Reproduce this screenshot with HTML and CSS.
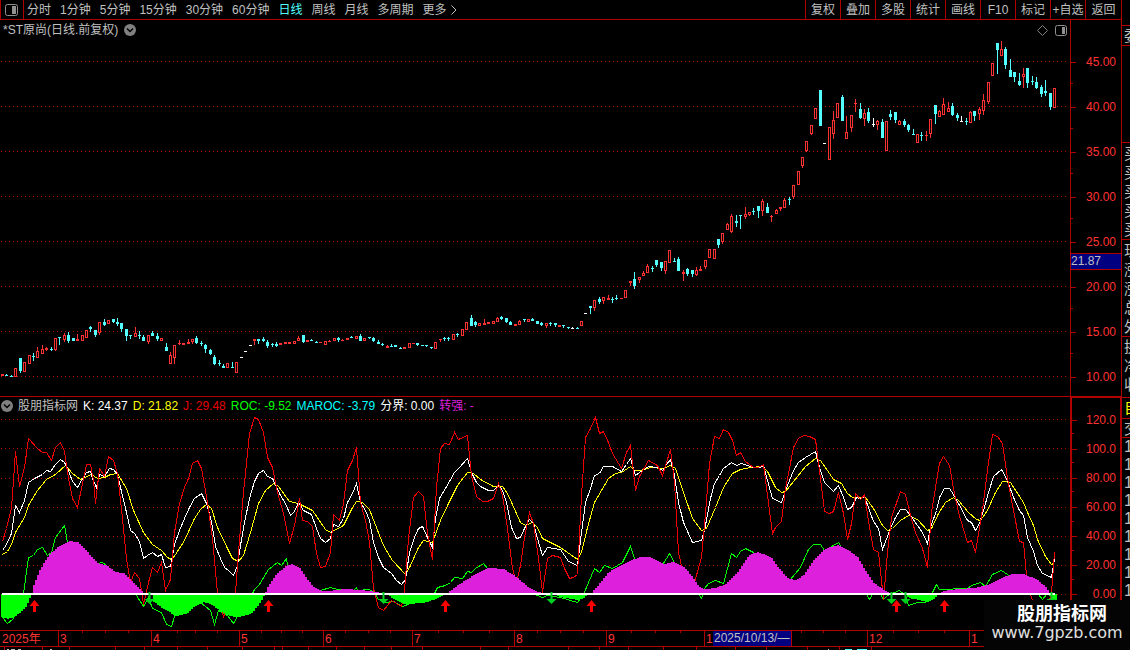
FILE: index.html
```html
<!DOCTYPE html>
<html lang="zh-CN">

<head>
    <meta charset="UTF-8">
    <meta name="viewport" content="width=device-width, initial-scale=1.0">
    <title>*ST原尚 日线</title>
    <link rel="stylesheet" href="styles.css">
</head>

<body>
    <div class="terminal">
        <div class="main">
            <!-- 顶部工具栏 -->
            <div class="toolbar">
                <button class="layout-btn" aria-label="布局">
                    <svg width="13" height="12" viewBox="0 0 13 12">
                        <rect x="0.5" y="0.5" width="12" height="11" rx="2" fill="none" stroke="#909090" />
                        <rect x="7" y="2" width="4" height="8" fill="#909090" />
                    </svg>
                </button>
                <div class="periods">
                    <button>分时</button>
                    <button>1分钟</button>
                    <button>5分钟</button>
                    <button>15分钟</button>
                    <button>30分钟</button>
                    <button>60分钟</button>
                    <button class="active">日线</button>
                    <button>周线</button>
                    <button>月线</button>
                    <button>多周期</button>
                    <button>更多
                        <svg width="6" height="10" viewBox="0 0 6 10">
                            <path d="M0.5 0.5L5 5L0.5 9.5" fill="none" stroke="#c0c0c0" />
                        </svg>
                    </button>
                </div>
                <div class="tools">
                    <button>复权</button>
                    <button>叠加</button>
                    <button>多股</button>
                    <button>统计</button>
                    <button>画线</button>
                    <button>F10</button>
                    <button>标记</button>
                    <button>+自选</button>
                    <button>返回</button>
                </div>
            </div>

            <!-- K线 -->
            <div class="panel price">
                <div class="chart">
                    <svg id="priceChart" viewBox="0 20 1070 376" preserveAspectRatio="none"></svg>
                    <div class="panel-head">
                        <span>*ST原尚(日线.前复权)</span>
                        <button class="fold" aria-label="展开">
                            <svg width="12" height="12" viewBox="0 0 12 12">
                                <circle cx="6" cy="6" r="6" fill="#808080" />
                                <path d="M3 4.5L6 7.5L9 4.5" fill="none" stroke="#000" stroke-width="1.5" />
                            </svg>
                        </button>
                        <div class="head-icons">
                            <svg width="11" height="11" viewBox="0 0 11 11">
                                <path d="M5.5 0.5L10.5 5.5L5.5 10.5L0.5 5.5Z" fill="none" stroke="#808080" />
                            </svg>
                            <svg width="12" height="11" viewBox="0 0 12 11">
                                <rect x="0.5" y="0.5" width="11" height="10" rx="2" fill="none" stroke="#909090" />
                                <rect x="7" y="2" width="3" height="7" fill="#909090" />
                            </svg>
                        </div>
                    </div>
                </div>
                <div class="axis">
                    <ul>
                        <li>45.00</li>
                        <li>40.00</li>
                        <li>35.00</li>
                        <li>30.00</li>
                        <li>25.00</li>
                        <li>20.00</li>
                        <li>15.00</li>
                        <li>10.00</li>
                    </ul>
                    <div class="price-mark">21.87</div>
                </div>
            </div>

            <!-- 指标 -->
            <div class="panel indicator">
                <div class="chart">
                    <svg id="kdjChart" viewBox="0 397 1070 233" preserveAspectRatio="none"></svg>
                    <div class="panel-head">
                        <button class="fold" aria-label="展开">
                            <svg width="12" height="12" viewBox="0 0 12 12">
                                <circle cx="6" cy="6" r="6" fill="#808080" />
                                <path d="M3 4.5L6 7.5L9 4.5" fill="none" stroke="#000" stroke-width="1.5" />
                            </svg>
                        </button>
                        <span>股朋指标网</span>
                        <span class="k">K: 24.37</span>
                        <span class="d">D: 21.82</span>
                        <span class="j">J: 29.48</span>
                        <span class="roc">ROC: -9.52</span>
                        <span class="maroc">MAROC: -3.79</span>
                        <span class="k">分界: 0.00</span>
                        <span class="strong">转强: -</span>
                    </div>
                </div>
                <div class="axis">
                    <ul>
                        <li>120.0</li>
                        <li>100.0</li>
                        <li>80.00</li>
                        <li>60.00</li>
                        <li>40.00</li>
                        <li>20.00</li>
                        <li>0.00</li>
                    </ul>
                </div>
            </div>

            <!-- 时间轴 -->
            <div class="dates">
                <span>2025年</span>
                <span>3</span>
                <span>4</span>
                <span>5</span>
                <span>6</span>
                <span>7</span>
                <span>8</span>
                <span>9</span>
                <span>1</span>
                <span>12</span>
                <span>1</span>
                <svg id="dateTicks" viewBox="0 0 1121 3" preserveAspectRatio="none"></svg>
                <div class="date-mark">2025/10/13/—</div>
            </div>
            <div class="tabs">
                <svg id="tabTicks" viewBox="0 0 1121 3" preserveAspectRatio="none"></svg>
            </div>
        </div>

        <!-- 右侧报价 -->
        <div class="quote">
            <div class="group first">委</div>
            <div class="group rows">
                <span>买</span><span>买</span><span>买</span><span>买</span><span>买</span>
            </div>
            <div class="group rows">
                <span>现</span><span>涨</span><span>涨</span><span>总</span><span>外</span>
            </div>
            <div class="group extra">
                <span>换</span><span>净</span><span>收</span>
            </div>
            <div class="group self">自</div>
            <div class="group deal">交</div>
            <div class="group ticks">
                <span>1</span><span>1</span><span>1</span><span>1</span><span>1</span><span>1</span><span>1</span><span>1</span><span>1</span>
            </div>
        </div>

        <div class="watermark">
            <strong>股朋指标网</strong>
            <span>www.7gpzb.com</span>
        </div>
    </div>
    <script src="chart.js"></script>
</body>

</html>
```
FILE: styles.css
```css
* {
    margin: 0;
    padding: 0;
    box-sizing: border-box;
}

body {
    background-color: #000;
    color: #c0c0c0;
    font-family: "Liberation Sans", "Noto Sans CJK SC", sans-serif;
    font-size: 12px;
    line-height: 18px;
    overflow: hidden;
}

button {
    background: none;
    border: none;
    color: inherit;
    font: inherit;
    white-space: nowrap;
    cursor: pointer;
}

ul {
    list-style: none;
}

svg {
    display: block;
}

.terminal {
    position: relative;
    display: flex;
    height: 100vh;
}

.main {
    flex: 1;
    min-width: 0;
    display: flex;
    flex-direction: column;
}

/* 工具栏 */
.toolbar {
    display: flex;
    height: 20px;
    border-bottom: 1px solid #b00000;
}

.layout-btn {
    width: 24px;
    padding-left: 4px;
    border-left: 1px solid #b00000;
    border-right: 1px solid #b00000;
}

.periods {
    display: flex;
    flex: 1;
    gap: 9px;
    padding-left: 3px;
}

.periods button {
    display: flex;
    align-items: center;
    gap: 4px;
}

.periods .active {
    color: #54ffff;
}

.tools {
    display: flex;
}

.tools button {
    width: 35px;
    border-left: 1px solid #b00000;
}

.tools button:last-child {
    width: 36px;
}

/* 图表区 */
.panel {
    display: flex;
    min-height: 0;
}

.price {
    flex: 376 1 0;
}

.indicator {
    flex: 234 1 0;
}

.chart {
    position: relative;
    flex: 1;
    min-width: 0;
}

.chart > svg {
    width: 100%;
    height: 100%;
}

.indicator .chart {
    border-top: 1px solid #b00000;
}

.panel-head {
    position: absolute;
    top: 0;
    left: 0;
    right: 0;
    display: flex;
    align-items: center;
    gap: 5px;
    padding: 0 3px 0 1px;
}

.price .panel-head {
    gap: 6px;
    padding-left: 3px;
    line-height: 20px;
}

.head-icons {
    display: flex;
    gap: 7px;
    margin-left: auto;
}

.k {
    color: #fff;
}

.d {
    color: #ff0;
}

.j {
    color: #e60000;
}

.roc {
    color: #0f0;
}

.maroc {
    color: #0ff;
}

.strong {
    color: #dc20dc;
}

/* 坐标轴 */
.axis {
    position: relative;
    width: 51px;
    color: #ff3232;
    text-align: right;
    border-left: 1px solid #b00000;
}

.axis ul {
    display: flex;
    flex-direction: column;
}

.axis li {
    position: relative;
    flex: 1;
    display: flex;
    align-items: center;
    justify-content: flex-end;
    padding-right: 5px;
}

.axis li::before,
.axis li::after {
    content: "";
    position: absolute;
    left: 0;
    height: 1px;
    background-color: #b00000;
}

.axis li::before {
    width: 5px;
    top: 50%;
}

.axis li::after {
    width: 2px;
    bottom: 0;
}

.axis li:last-child::after {
    display: none;
}

.price ul {
    height: 360px;
    margin-top: 19px;
}

.indicator .axis {
    border: 2px solid #b00000;
    border-right-width: 1px;
    border-bottom: none;
}

.indicator li {
    padding-right: 4px;
}

.indicator ul {
    height: 204px;
    margin-top: 7px;
}

.price-mark {
    position: absolute;
    top: 233px;
    left: 0;
    right: 0;
    height: 17px;
    line-height: 15px;
    color: #c0c0c0;
    text-align: left;
    background-color: #000080;
    border-top: 1px solid #b00000;
    border-bottom: 1px solid #b00000;
}

/* 时间轴 */
.dates {
    position: relative;
    display: grid;
    grid-template-columns: 58fr 93fr 88fr 84fr 89fr 102fr 92fr 98fr 163fr 102fr 152fr;
    height: 17px;
    line-height: 16px;
    color: #ff3232;
    border-top: 1px solid #b00000;
    border-bottom: 1px solid #b00000;
}

.dates span {
    padding-left: 1px;
    border-left: 1px solid #b00000;
}

.dates span:first-child {
    padding-left: 2px;
    border-left: none;
}

.dates svg,
.tabs svg {
    width: 100%;
    height: 3px;
}

.dates svg {
    position: absolute;
    top: 0;
    left: 0;
}

.date-mark {
    position: absolute;
    top: 0;
    left: 713px;
    width: 79px;
    height: 15px;
    line-height: 15px;
    padding-left: 1px;
    white-space: nowrap;
    color: #c0c0c0;
    background-color: #000080;
    border-right: 1px solid #b00000;
}

.tabs {
    height: 3px;
}

/* 右侧报价 */
.quote {
    width: 9px;
    padding-top: 25px;
    overflow: hidden;
    font-size: 15px;
    line-height: 19px;
    border-left: 1px solid #b00000;
}

.group {
    padding-left: 2px;
    border-top: 1px solid #b00000;
}

.group span {
    display: block;
}

.first {
    height: 21px;
    margin-bottom: 96px;
    border-bottom: 1px solid #b00000;
}

.rows {
    height: 97px;
    padding-top: 1px;
}

.extra {
    height: 61px;
}

.self {
    height: 21px;
    color: #ff0;
}

.deal {
    height: 19px;
}

.ticks {
    font-size: 16px;
    line-height: 18px;
}

/* 水印 */
.watermark {
    position: absolute;
    right: 0;
    bottom: 0;
    display: flex;
    flex-direction: column;
    align-items: center;
    width: 146px;
    height: 50px;
    padding-top: 4px;
    background-color: #040404;
}

.watermark strong {
    padding-right: 10px;
    margin-left: 10px;
    padding-left: 10px;
    color: #fff;
    font-size: 18px;
    line-height: 20px;
}

.watermark span {
    color: #e0e0e0;
    font-family: "DejaVu Sans", sans-serif;
    font-size: 16px;
    line-height: 18px;
}
```
FILE: chart.js
```js
var NS = 'http://www.w3.org/2000/svg';
var RED = '#ff3232', CYAN = '#54ffff', WHITE = '#ffffff', LINE = '#b00000';
var COUNT = 239;

// 每根K线: 最高 实体上沿 实体下沿 最低 方向(u涨 d跌 w平)
var candles = ('374 374 376 376 u,374 375 376 376 d,375 376 377 377 d,368 368 377 377 u,358 358 371 373 d,362 362 372 372 u,355 355 364 364 u,353 356 357 361 d,' +
    '347 351 358 358 u,345 349 354 354 u,347 348 350 351 u,347 349 350 351 d,338 338 350 351 u,337 337 338 345 d,333 335 340 342 u,332 335 341 343 d,' +
    '338 338 341 341 d,334 339 341 341 u,335 335 341 341 u,330 330 338 338 u,326 327 329 332 d,330 330 335 337 d,322 322 333 335 u,319 322 325 326 d,' +
    '320 320 324 324 u,319 319 322 323 d,318 322 324 326 d,323 323 329 332 d,329 329 336 341 d,335 335 336 339 d,327 333 337 337 u,331 335 336 339 d,' +
    '335 337 341 341 d,335 335 342 344 u,331 333 336 336 d,333 336 339 341 d,338 338 341 341 u,343 347 351 351 d,352 355 364 364 u,345 345 358 364 u,' +
    '340 343 344 345 u,343 343 345 345 u,339 342 344 344 u,339 339 342 344 u,336 338 343 344 d,341 343 344 346 d,344 345 349 353 d,349 350 354 355 d,' +
    '355 357 364 365 d,360 363 364 366 d,364 366 368 368 d,363 363 368 368 u,362 367 368 368 d,362 362 373 373 u,357 357 358 358 w,351 351 352 352 w,' +
    '345 345 346 346 w,339 339 341 345 u,339 339 341 344 d,337 339 341 342 d,340 342 346 348 d,343 344 345 347 d,342 344 346 347 d,343 343 345 345 u,' +
    '342 342 344 344 u,342 342 344 344 u,341 341 344 344 u,336 338 341 341 u,335 335 342 343 d,340 340 342 342 u,339 340 341 341 d,341 342 343 343 d,' +
    '342 342 343 343 u,341 341 345 345 u,340 341 342 342 u,338 338 341 341 u,337 338 340 342 d,339 340 341 341 u,338 338 340 340 u,336 337 338 338 d,' +
    '336 336 339 339 u,334 336 341 341 d,338 338 341 341 u,337 337 338 339 d,337 338 341 342 d,340 342 344 344 d,343 344 345 346 d,345 346 348 348 u,' +
    '344 346 347 347 d,345 345 347 347 d,347 348 349 349 d,347 347 349 349 u,343 343 348 348 u,343 343 344 344 u,343 343 345 346 d,345 345 346 346 d,' +
    '345 345 346 347 d,347 347 348 349 d,342 342 349 349 u,339 339 340 342 u,337 338 339 341 d,337 338 339 341 d,334 334 340 340 u,333 334 335 337 d,' +
    '329 329 336 336 u,322 322 330 330 u,315 318 326 326 d,321 322 325 327 d,323 323 326 326 u,319 323 325 325 u,322 322 324 324 u,321 321 324 324 u,' +
    '317 318 322 322 u,316 317 319 320 d,318 318 322 323 d,321 322 325 325 d,324 324 326 326 u,320 321 325 325 u,319 319 320 322 d,319 319 322 322 u,' +
    '318 319 321 321 d,321 321 324 324 d,322 323 325 326 d,323 323 326 328 u,322 323 324 326 d,323 323 325 327 d,325 325 327 327 u,325 325 326 328 d,' +
    '327 327 328 329 d,327 328 329 329 w,327 328 329 329 d,321 321 326 326 u,313 313 314 314 w,306 306 308 314 d,300 300 308 311 u,297 299 302 304 d,' +
    '297 297 301 304 u,295 298 300 300 u,297 299 300 303 d,295 298 299 300 d,298 298 299 299 u,290 290 298 298 u,281 281 283 286 u,272 279 286 289 d,' +
    '277 277 280 283 u,271 273 276 276 u,264 266 273 273 u,266 268 269 272 d,260 260 265 267 d,262 262 268 271 d,261 261 271 274 u,250 250 263 263 u,' +
    '258 261 262 262 d,257 259 271 271 d,270 272 274 281 u,268 269 274 276 d,270 270 274 277 d,267 270 275 276 u,266 269 271 271 u,260 260 267 269 u,' +
    '249 249 258 258 u,249 249 259 259 u,239 239 245 248 d,233 233 242 244 u,223 224 230 230 u,214 216 232 233 u,215 221 223 227 d,215 215 216 229 d,' +
    '207 214 217 219 u,212 212 215 216 u,208 211 212 215 d,206 206 211 218 d,199 201 211 216 u,203 207 213 213 d,215 216 217 222 u,209 210 214 214 u,' +
    '207 207 209 211 u,198 200 208 208 u,197 199 200 205 d,185 185 197 199 u,171 171 185 185 u,157 157 166 168 u,141 141 151 152 u,125 125 134 135 u,' +
    '108 108 119 119 u,90 90 126 126 d,143 143 144 144 w,127 127 160 160 u,111 120 134 139 u,103 103 118 118 u,95 97 121 121 d,116 132 139 139 u,' +
    '115 115 128 132 u,99 103 104 112 u,103 109 118 119 d,109 113 119 126 u,108 112 121 123 d,118 124 125 127 w,120 121 125 130 u,119 122 138 138 d,' +
    '121 121 151 151 u,110 114 117 120 d,112 112 120 123 d,120 121 125 125 u,119 121 125 127 d,124 125 130 132 d,129 134 135 135 d,134 134 143 143 u,' +
    '132 135 136 141 d,131 135 136 141 u,119 119 134 138 u,105 105 114 124 d,110 111 117 117 u,98 104 115 115 u,102 108 112 112 u,103 106 115 116 d,' +
    '113 115 118 121 d,116 121 122 122 w,118 121 122 125 d,111 112 123 123 u,111 111 116 121 d,107 109 114 120 u,94 100 111 115 u,82 82 102 104 u,' +
    '63 63 76 76 u,43 43 50 74 d,41 49 56 56 u,47 49 65 69 d,59 70 77 77 d,72 72 77 82 d,73 81 85 86 d,68 74 77 88 u,' +
    '68 68 83 88 d,76 81 82 85 d,77 82 88 89 d,85 87 94 97 d,80 91 93 96 d,93 93 107 110 d,88 88 108 108 u').split(',');

var kLine = '2,550 6,544 11,533 15,505 19,512 24,500 28,482 34,478 42,474 46,470 50,471 55,464 60,459 64,462 68,470 72,481 77,487 81,480 86,472 90,471 92,478 96,487 99,474 104,476 109,468 113,469 117,474 121,491 126,512 130,530 134,533 139,541 143,558 147,555 152,552 157,556 161,554 165,567 170,566 174,544 179,530 184,518 189,507 194,498 201,493 206,503 211,521 215,546 220,558 224,567 228,570 233,575 237,565 240,545 244,522 249,498 254,481 258,473 263,470 267,476 272,478 280,495 285,503 290,515 294,511 298,502 303,510 311,514 316,528 320,538 325,542 330,538 333,524 338,526 343,518 347,502 352,493 356,483 360,502 365,510 369,520 373,542 378,557 383,567 391,573 396,580 401,584 405,579 409,552 414,537 418,528 422,526 427,537 432,547 435,518 439,498 445,488 449,481 454,472 458,468 467,458 471,472 476,482 480,486 488,490 493,490 498,485 502,490 506,502 511,527 516,538 520,537 524,528 529,519 533,523 537,538 542,555 547,547 560,549 568,561 577,565 581,532 585,502 590,488 594,475 599,473 603,466 612,466 621,471 626,464 630,458 635,475 639,472 648,466 657,467 662,470 666,464 670,459 674,475 678,502 683,522 688,533 692,542 701,540 704,530 710,498 714,483 719,475 723,468 731,462 736,465 741,463 753,467 760,467 763,465 767,480 772,498 781,502 785,490 793,470 798,462 805,457 815,451 819,467 824,482 833,491 838,485 843,497 847,509 851,507 856,497 860,498 864,496 869,510 873,521 878,528 882,549 890,528 895,517 900,509 905,509 910,515 917,525 922,532 927,543 930,527 936,510 939,497 944,488 949,488 953,494 958,503 967,520 971,522 975,530 979,523 983,510 988,492 993,476 1001,469 1007,480 1013,497 1019,510 1023,515 1027,537 1033,551 1037,565 1042,573 1051,577 1054,558';

var dLine = '2,554 7,551 11,544 15,532 24,517 28,505 37,490 46,479 55,474 65,465 72,473 80,479 91,474 97,478 104,477 110,474 117,473 126,488 133,510 143,532 152,544 161,550 167,557 171,559 175,554 184,540 194,518 200,509 206,504 211,508 217,527 227,548 232,558 238,561 243,555 250,532 258,503 265,490 273,483 278,486 289,501 298,503 312,510 325,529 330,532 343,525 352,507 356,501 362,502 369,509 374,522 383,545 392,560 405,574 410,565 418,547 423,540 432,542 440,520 448,503 457,485 467,472 473,473 480,479 493,486 502,486 507,493 516,513 520,522 525,525 532,522 537,527 542,538 560,547 577,559 581,552 587,527 594,502 608,478 615,473 621,472 630,466 634,470 640,470 650,467 663,468 670,465 675,468 683,492 692,518 701,530 706,528 715,507 723,487 732,473 740,469 750,467 762,466 767,471 775,487 781,492 785,491 793,481 805,466 815,458 820,460 827,470 833,479 841,483 847,493 852,497 865,497 873,508 882,525 887,530 892,528 900,520 908,515 917,519 927,530 931,528 938,513 945,502 953,497 958,500 968,512 976,519 980,520 987,510 995,492 1002,481 1010,482 1023,502 1027,512 1033,525 1037,539 1045,556 1051,564 1053,563';

var jLine = '2,541 6,528 11,508 15,451 19,486 24,467 28,438 37,448 42,452 46,452 51,460 55,447 60,442 64,451 68,478 72,498 77,507 81,488 86,464 90,464 93,480 95,503 99,468 104,476 108,456 113,460 117,473 122,518 126,558 130,582 134,572 139,578 143,604 148,582 152,567 157,572 161,562 165,590 170,579 174,532 179,503 184,487 188,478 192,463 197,460 201,468 207,502 212,538 217,593 223,616 229,604 235,592 238,552 243,492 249,433 254,417 258,419 263,432 267,457 272,467 277,492 283,513 289,543 294,525 299,498 302,520 307,521 312,526 316,553 320,567 325,566 330,552 333,514 339,520 343,503 347,470 352,460 356,447 360,502 365,520 369,542 373,588 378,607 383,610 391,600 401,606 404,590 408,538 413,497 418,491 423,496 427,533 432,559 436,487 440,448 444,443 449,444 454,432 458,439 467,435 471,475 476,496 482,501 487,501 493,498 498,483 502,495 507,528 512,568 516,582 520,565 524,537 529,512 533,523 538,558 542,592 547,558 552,555 560,557 564,568 569,578 573,577 577,574 581,495 585,437 590,428 595,417 599,433 603,431 608,442 612,453 621,468 626,452 630,445 635,490 639,476 648,460 657,465 662,475 666,462 670,449 674,482 678,552 683,574 688,590 694,582 701,557 704,525 709,463 714,436 719,438 723,429 728,432 732,440 736,455 740,452 745,461 753,467 758,467 763,464 767,495 772,533 775,527 781,521 785,488 789,468 793,447 798,438 803,435 809,436 815,439 819,470 824,511 829,513 833,511 838,492 843,513 847,539 851,523 855,493 860,499 864,494 869,527 873,549 878,552 883,599 887,552 891,517 900,491 905,494 910,515 915,532 922,548 927,567 931,512 935,487 939,463 943,456 949,465 953,488 958,512 967,542 971,540 975,552 979,528 983,502 988,462 992,434 997,436 1002,443 1007,478 1013,510 1019,541 1023,542 1027,585 1032,600 1036,612 1046,610 1051,593 1054,552';

var rocLine = '2,617 7,623 12,619 20,606 23,593 28,557 33,555 37,549 42,547 47,555 51,552 55,537 64,525 67,542 75,570 90,575 97,563 102,562 107,566 120,585 136,595 143,606 148,597 152,608 161,612 166,624 171,626 175,613 185,606 200,602 210,610 214,624 218,610 227,615 233,623 237,616 252,593 254,589 259,584 268,569 277,562 281,565 286,558 287,565 300,585 320,590 330,587 337,589 353,590 356,587 357,590 369,589 374,592 378,599 385,602 393,601 402,606 410,603 430,599 434,593 437,587 445,585 450,582 454,577 462,578 467,571 471,572 475,568 483,563 487,568 500,585 537,595 542,597 547,595 560,597 577,602 583,594 588,582 594,568 599,572 604,565 612,568 622,562 630,546 634,558 648,580 663,563 669,553 674,562 685,580 699,595 701,598 704,588 708,583 715,580 723,583 731,553 736,557 740,551 745,548 753,552 770,575 790,579 800,567 808,549 813,544 820,544 824,550 833,545 838,542 841,547 855,580 866,594 869,599 872,594 880,594 883,599 887,595 899,590 905,595 908,605 917,602 925,602 931,594 936,584 939,589 967,588 971,585 980,582 985,586 992,574 1001,570 1007,574 1025,585 1038,594 1042,599 1046,594';

// MAROC 柱体, 零轴以上为紫色, 以下为绿色
var maroc = '1,617 7,619 13,617 20,612 25,607 31,594 33,585 38,572 43,563 50,553 60,545 68,541 77,542 83,548 92,558 97,563 107,566 115,572 123,573 130,580 137,587 143,593 151,594 153,602 160,607 170,613 175,616 187,613 193,607 202,602 210,604 218,610 228,616 237,617 250,614 258,605 264,594 267,587 275,575 285,566 292,564 298,567 305,577 313,587 320,591 328,591 345,589 370,591 380,593 385,594 395,600 403,604 423,603 435,599 445,594 453,588 462,582 473,575 488,568 503,569 517,578 527,587 538,592 547,594 552,594 560,597 577,600 583,598 588,594 590,594 595,588 607,573 618,566 630,560 640,557 650,557 657,561 663,564 673,562 683,567 692,577 698,586 703,589 715,588 725,584 737,572 748,555 757,552 770,557 778,568 787,578 795,580 803,575 813,560 823,550 830,547 837,545 847,550 857,557 863,568 872,582 882,589 887,592 891,594 905,594 908,598 927,602 933,599 938,594 943,591 957,589 973,588 987,585 1003,577 1012,574 1023,574 1037,580 1045,587 1048,592 1050,599 1056,600';

function add(svg, name, attrs) {
    var el = document.createElementNS(NS, name);
    for (var key in attrs) {
        el.setAttribute(key, attrs[key]);
    }
    svg.appendChild(el);
}

function box(svg, x, y, w, h, color) {
    add(svg, 'rect', { x: x, y: y, width: w, height: h, fill: color, 'shape-rendering': 'crispEdges' });
}

function grid(svg, rows) {
    rows.forEach(function(y) {
        add(svg, 'path', { d: 'M1 ' + (y + 0.5) + 'H1067', stroke: LINE, 'stroke-dasharray': '1 3', 'shape-rendering': 'crispEdges' });
    });
}

function barX(i) {
    return Math.round(2 + i * 1052 / (COUNT - 1));
}

// K线
var price = document.querySelector('#priceChart');
grid(price, [61, 106, 151, 196, 241, 286, 331, 376]);
candles.forEach(function(item, i) {
    var c = item.split(' ');
    var high = +c[0], top = +c[1], bottom = +c[2], low = +c[3];
    var color = c[4] == 'u' ? RED : c[4] == 'd' ? CYAN : WHITE;
    var x = barX(i);
    box(price, x, high, 1, low - high, color);
    box(price, x - 1, top, 3, bottom - top, color);
    // 阳线空心
    if (c[4] == 'u' && bottom - top > 2) {
        box(price, x, top + 1, 1, bottom - top - 2, '#000');
    }
});

// 指标线
var kdj = document.querySelector('#kdjChart');
grid(kdj, [419, 448, 478, 507, 536, 565, 594]);
[[rocLine, '#00ff00'], [dLine, '#ffff00'], [kLine, '#ffffff'], [jLine, '#f00000']].forEach(function(s) {
    add(kdj, 'polyline', { points: s[0], fill: 'none', stroke: s[1], 'shape-rendering': 'crispEdges', transform: 'translate(0.5 0.5)' });
});

// 柱体
var pts = maroc.split(' ').map(function(p) {
    return p.split(',').map(Number);
});
for (var x = 1, k = 0; x < 1056; x += 2) {
    while (k < pts.length - 2 && pts[k + 1][0] < x) {
        k++;
    }
    var a = pts[k], b = pts[k + 1];
    var y = Math.round(a[1] + (b[1] - a[1]) * (x - a[0]) / (b[0] - a[0]));
    if (y < 594) {
        box(kdj, x, y, 2, 594 - y, '#dc20dc');
    } else if (y > 594) {
        box(kdj, x, 594, 2, y - 594, '#00ff00');
    }
}
box(kdj, 2, 593, 1053, 2, '#fff');

// 买卖箭头
[34, 268, 445, 591, 896, 944].forEach(function(x) {
    add(kdj, 'path', { d: 'M' + (x + 0.5) + ' 600l5 6h-3.5v6h-3v-6h-3.5z', fill: '#ff0000' });
});
[149, 383, 551, 891, 905, 1051].forEach(function(x) {
    add(kdj, 'path', { d: 'M' + (x + 0.5) + ' 604l5 -5h-4v-7h-2v7h-4z', fill: '#00d020' });
});

// 时间刻度
var dateTicks = document.querySelector('#dateTicks');
[82, 105, 128, 177, 195, 217, 261, 281, 302, 345, 368, 390, 438, 463, 489, 537, 560, 583, 631, 655, 680, 801, 823, 845, 893, 918, 944].forEach(function(x) {
    box(dateTicks, x, 0, 1, 2, LINE);
});
var tabTicks = document.querySelector('#tabTicks');
[4, 42, 69, 115, 144, 177, 207, 242, 274, 282, 308, 336, 364, 391, 422, 480, 508, 568, 599, 628, 663, 696, 735, 766, 807, 839, 871].forEach(function(x) {
    box(tabTicks, x, 0, 1, 3, LINE);
});
[[7, 2], [11, 4], [18, 3], [50, 2], [828, 1]].forEach(function(m) {
    box(tabTicks, m[0], 2, m[1], 1, '#c0c0c0');
});
box(tabTicks, 845, 2, 7, 1, CYAN);
box(tabTicks, 857, 2, 10, 1, CYAN);
```
